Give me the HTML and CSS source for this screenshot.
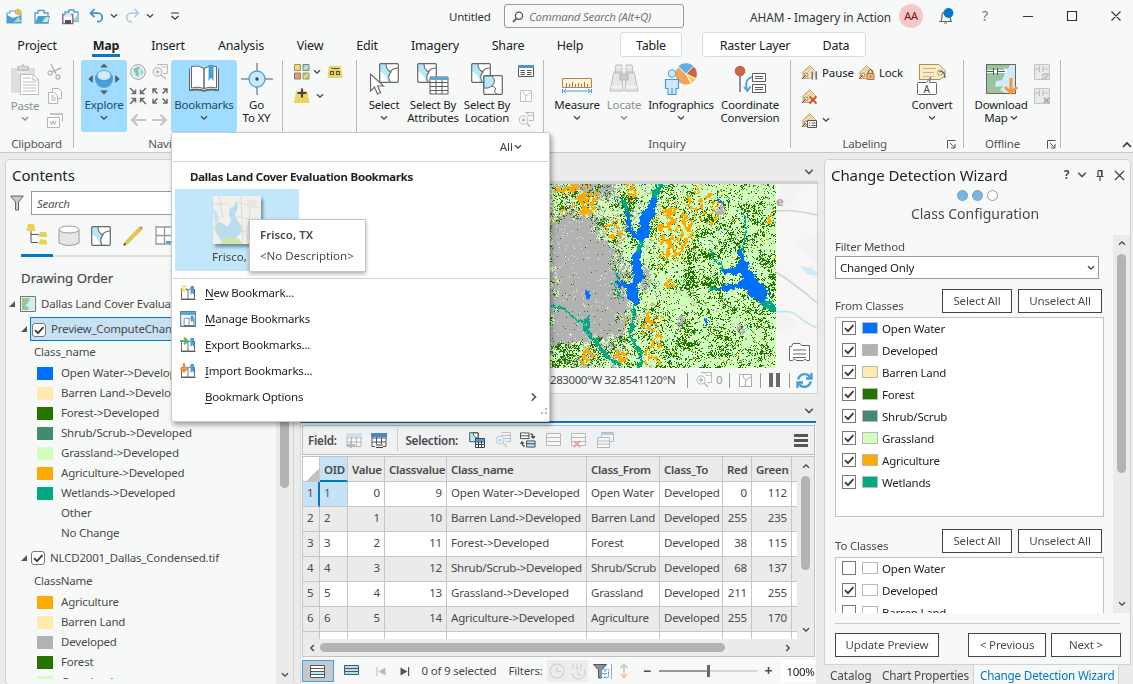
FILE: index.html
```html
<!DOCTYPE html>
<html lang="en">
<head>
<meta charset="utf-8">
<title>Untitled - Map</title>
<link rel="stylesheet" href="styles.css">
</head>
<body>
<svg class="defs" aria-hidden="true">
  <symbol id="chev" viewBox="0 0 8 6"><path d="M1 1.200l3 3 3-3" fill="none" stroke="currentColor" stroke-width="1.300"/></symbol>
  <symbol id="tick" viewBox="0 0 14 14"><path d="M3 7.200l3 3 5.400-6" fill="none" stroke="#3c3c3c" stroke-width="1.900"/></symbol>
  <symbol id="tag" viewBox="0 0 16 16"><path d="M2 14.500V8l6.500-6.500L14 7v3.500L8 14.500z" fill="#f5e3b5" stroke="#c39f6b"/><path d="M5 7l4-4M6.500 8.500l4-4M8.500 9.500l3-3" stroke="#d6ba8b" fill="none"/><circle cx="5" cy="11" r="2" fill="#fff" stroke="#a97b43"/><path d="M5 11l-4 4" stroke="#555"/></symbol>
  <symbol id="book" viewBox="0 0 16 16"><path d="M1.500 4.500v9.500h13V4M8 5v9M1.500 4.500Q5 3 8 5q2-1.500 4-1" fill="#fff" stroke="#6c6c6c"/><path d="M1 14.500h14.500" stroke="#5c5c5c"/><path d="M10.500 1h3.500v9l-1.750-2-1.750 2z" fill="#4a9fd8"/></symbol>
  <symbol id="poly" viewBox="0 0 20 20"><rect x=".7" y=".7" width="18.600" height="18.600" rx="1" fill="#fff"/><path d="M1 1h6q0 6 5 8-4 4-1 10H9Q8 12 1 8z" fill="#b5e9f9"/><path d="M1 8q7 4 8 11h3q-3-6 0-10Q7 7 7 1H1z" fill="#b5e9f9"/><path d="M7 1q0 6 5 8-4 4-1 10M11 9q3-4 8-4" fill="none" stroke="#6c6c6c" stroke-width="1.100"/><rect x=".7" y=".7" width="18.600" height="18.600" rx="1" fill="none" stroke="#666" stroke-width="1.200"/></symbol>
  <symbol id="launch" viewBox="0 0 9 9"><path d="M.5 8.500v-8h8M3 3l4.500 4.500M8 4v4H4" fill="none" stroke="#555"/></symbol>
  <symbol id="grid" viewBox="0 0 16 16"><path d="M1 1.500h14v13H1zM1 6h14M1 10h14M5.500 3v11M10.500 3v11" fill="#fff" stroke="currentColor"/></symbol>
</svg>

<header class="ribbon">
  <div class="titlebar">
    <div class="quick">
      <svg width="17" height="17" viewBox="0 0 17 17"><path d="M1 15V5h3V3h6v2h5v10z" fill="#fff" stroke="#5aa7de" stroke-width="1.200"/><path d="M1 15V7l6 3 8-3v8z" fill="#4a9fd8"/><path d="M8 14l5-6 2 6z" fill="#b7dca8"/><circle cx="12" cy="4" r="2.500" fill="#f4e27c" stroke="#cbb23e"/><path d="M12 0v8M8 4h8M9.500 1.500l5 5M14.500 1.500l-5 5" stroke="#cbb23e" stroke-width=".6"/></svg>
      <svg width="17" height="17" viewBox="0 0 17 17"><path d="M1 15V5h3V2.500h6V5h4v10z" fill="#fff" stroke="#4a9fd8" stroke-width="1.300"/><path d="M1 15L4 8h12l-2 7z" fill="#4a9fd8"/><path d="M8 14l4-5 3 0-1.500 5z" fill="#d7ecc4"/></svg>
      <svg width="17" height="17" viewBox="0 0 17 17"><path d="M3 8V4h4V2h5v2h4v9h-5" fill="#fff" stroke="#4a9fd8" stroke-width="1.300"/><path d="M11 12l5-6v7h-5z" fill="#a9d6a0"/><path d="M.8 6.500h10v9H.8z" fill="#fff" stroke="#8a66b5" stroke-width="1.500"/><path d="M3 12h6v4H3z" fill="#555"/><path d="M3 6h6v3H3z" fill="#e8dff4"/></svg>
      <svg width="15" height="16" viewBox="0 0 15 16" class="g11"><path d="M5.500 1L1.500 5.200l4 4M2 5.200h7a4 4 0 0 1 0 8.500H8" fill="none" stroke="#3f8fd6" stroke-width="1.800"/></svg>
      <svg class="chev g8"><use href="#chev"/></svg>
      <svg width="15" height="16" viewBox="0 0 15 16" class="g7 pale"><path d="M9.500 1l4 4.200-4 4M13 5.200H6a4 4 0 0 0 0 8.500h1" fill="none" stroke="#3f8fd6" stroke-width="1.800"/></svg>
      <svg class="chev g8"><use href="#chev"/></svg>
      <svg width="10" height="9" viewBox="0 0 10 9" class="g14"><path d="M1 1h8M1.500 4l3.500 3.300L8.500 4" fill="none" stroke="#333" stroke-width="1.200"/></svg>
    </div>
    <span class="doc">Untitled</span>
    <div class="cmd"><svg width="12" height="12" viewBox="0 0 12 12"><circle cx="7" cy="4.700" r="3.600" fill="none" stroke="#555" stroke-width="1.300"/><path d="M4.500 7.300L1 11" stroke="#555" stroke-width="1.800"/></svg><i>Command Search (Alt+Q)</i></div>
    <span class="account">AHAM - Imagery in Action</span>
    <span class="avatar">AA</span>
    <svg class="bell" width="17" height="17" viewBox="0 0 17 17"><path d="M1 13.500h13M3 13q1-2 1-5 0-4 3.500-4.500Q12 4 12 9l1 4" fill="none" stroke="#666" stroke-width="1.200"/><path d="M6 15h3" stroke="#666"/><circle cx="10.500" cy="5" r="4.900" fill="#0079c8"/></svg>
    <span class="help">?</span>
    <svg class="win" width="100" height="12" viewBox="0 0 100 12"><path d="M1 6.500h10M45.500 1.500h9v9h-9zM89.500 1.500l9 9M98.500 1.500l-9 9" fill="none" stroke="#333" stroke-width="1.100"/></svg>
  </div>

  <nav class="tabs">
    <span class="w74">Project</span><b class="w64"><span>Map</span></b><span class="w60">Insert</span><span class="w86">Analysis</span><span class="w52">View</span><span class="w62">Edit</span><span class="w74">Imagery</span><span class="w72">Share</span><span class="w52">Help</span>
    <div class="ctx ctx-a"><span class="w60">Table</span></div>
    <div class="ctx ctx-b"><span class="w104">Raster Layer</span><span class="w56">Data</span></div>
  </nav>

  <div class="groups">
    <section class="group" style="width:74px">
      <div class="tools clip">
        <div class="big w44 off"><svg width="32" height="33" viewBox="0 0 32 33"><path d="M2 5h24v25H2z" fill="#dedede"/><path d="M8 3h4q2-4 4 0h4v5H8z" fill="#c4c4c4"/><path d="M10 5h8M8 9h12" stroke="#f4f4f4"/><path d="M11.500 11.500h13l5 5v15h-18z" fill="#fff" stroke="#bdbdbd"/><path d="M24 12v5h5M14 15h8M14 19h13M14 22h13M14 25h13M14 28h13" fill="none" stroke="#bdbdbd"/></svg><span>Paste</span><svg class="chev"><use href="#chev"/></svg></div>
        <div class="stack">
          <svg width="16" height="16" viewBox="0 0 16 16"><path d="M4 0l5 10M14 4L5 8" stroke="#b5b5b5" stroke-width="1.500"/><circle cx="3" cy="9" r="2" fill="none" stroke="#b5b5b5" stroke-width="1.300"/><circle cx="11" cy="13" r="2" fill="none" stroke="#b5b5b5" stroke-width="1.300"/></svg>
          <svg width="16" height="16" viewBox="0 0 16 16"><path d="M5.500.500h6l3 3v7h-9z" fill="#fff" stroke="#b5b5b5"/><path d="M1.500 4.500h6l3 3v8h-9zM4 8h3M4 10h5M4 12h5" fill="#fff" stroke="#b5b5b5"/></svg>
          <svg width="16" height="16" viewBox="0 0 16 16"><path d="M3.500 1.500h12v8" fill="none" stroke="#b5b5b5"/><path d="M3 2h12" stroke="#c5c5c5" stroke-width="2"/><path d="M.5 5.500h12v10H.5zM3 9l1.500 4L6 9l1.500 4L9 9" fill="#fff" stroke="#b5b5b5"/></svg>
        </div>
      </div>
      <div class="cap">Clipboard</div>
    </section>

    <section class="group" style="width:209px">
      <div class="tools nav">
        <div class="big w46 on"><svg width="32" height="32" viewBox="0 0 32 32"><circle cx="16" cy="16" r="9" fill="#4d9ed8"/><ellipse cx="16" cy="12.500" rx="6.500" ry="4.500" fill="#d3eafb"/><path d="M16 .5l4 4h-8zM16 31.500l4-4h-8zM.3 16l4.500-4v8zM31.700 16l-4.500-4v8z" fill="#5c5c5c"/></svg><span>Explore</span><svg class="chev"><use href="#chev"/></svg></div>
        <div class="six">
          <svg width="16" height="16" viewBox="0 0 16 16"><circle cx="8" cy="8" r="7.300" fill="#fff" stroke="#999"/><circle cx="8" cy="8" r="5.800" fill="#c8e7f8"/><path d="M3 6q3-4 7-3l-2 3 1 5-2 2q-1-4-4-7M11 6l2 2-1 3z" fill="#8fc39b"/></svg>
          <svg width="16" height="16" viewBox="0 0 16 16"><path d="M5 .5h10.500v9H11M9 1q1 3 6 2" fill="none" stroke="#bbb"/><circle cx="5.500" cy="8" r="4.200" fill="#fff" stroke="#bbb" stroke-width="1.300"/><path d="M5.500 6v4M3.500 8h4M9 11l5 4" stroke="#bbb" stroke-width="1.500"/></svg>
          <svg width="16" height="16" viewBox="0 0 16 16"><path d="M0 0l5 5M1.500 5.500h4v-4M16 0l-5 5M10.500 1.500v4h4M0 16l5-5M1.500 10.500h4v4M16 16l-5-5M10.500 14.500v-4h4" fill="none" stroke="#6a6a6a" stroke-width="1.500"/></svg>
          <svg width="16" height="16" viewBox="0 0 16 16"><path d="M5.500 5.500L1 1M1 5V1h4M10.500 5.500L15 1M11 1h4v4M5.500 10.500L1 15M1 11v4h4M10.500 10.500L15 15M11 15h4v-4" fill="none" stroke="#6a6a6a" stroke-width="1.500"/></svg>
          <svg width="16" height="16" viewBox="0 0 16 16"><path d="M16 8H2M7.500 2.500L2 8l5.500 5.500" fill="none" stroke="#c5c7c7" stroke-width="2.200"/></svg>
          <svg width="16" height="16" viewBox="0 0 16 16"><path d="M0 8h14M8.500 2.500L14 8l-5.500 5.500" fill="none" stroke="#c5c7c7" stroke-width="2.200"/></svg>
        </div>
        <div class="big w66 on"><svg width="32" height="32" viewBox="0 0 32 32"><path d="M1.500 5.500v22q7-2.500 14.500 0 7-2.500 14.500 0v-22" fill="#eee" stroke="#666"/><path d="M2 27.500q7-2 14 .5 7-2.500 14-.5" fill="none" stroke="#666" stroke-width="1.600"/><path d="M3.500 25V3.500q7-2 12.500 2v20q-6-2.500-12.500-.5zM28.500 25V3.500Q22 1.500 16 5.500v20q6-2.500 12.500-.5z" fill="#fff" stroke="#666"/><path d="M20.500 2h5v16l-2.500-3-2.500 3z" fill="#4a9fd8"/></svg><span>Bookmarks</span><svg class="chev"><use href="#chev"/></svg></div>
        <div class="big w39"><svg width="32" height="32" viewBox="0 0 32 32"><path d="M16 0v8M16 24v8M0 16h8M24 16h8" stroke="#555"/><circle cx="16" cy="16" r="8" fill="#cde8fa" stroke="#4a9fd8" stroke-width="1.300"/><circle cx="16" cy="16" r="1.700" fill="#444"/></svg><span>Go</span><span>To XY</span></div>
      </div>
      <div class="cap navcap">Navigate</div>
    </section>

    <section class="group" style="width:74px">
      <div class="tools layer">
        <svg width="16" height="16" viewBox="0 0 16 16"><path d="M.5.500h6v6h-6z" fill="#ecd96f" stroke="#a39657"/><path d="M9 .5h6v6H9z" fill="#9fd4ee" stroke="#68899c"/><path d="M.5 9h6v6h-6z" fill="#dc9f75" stroke="#a1765a"/><path d="M9 9h6v6H9z" fill="#97cba0" stroke="#a39657"/><path d="M10 14l4-4M10 5l4-3" stroke="#f1db65" stroke-width="2"/></svg>
        <svg class="chev"><use href="#chev"/></svg>
        <svg width="16" height="16" viewBox="0 0 16 16"><path d="M2 2h12l1.500 12H.5z" fill="#ecd65e"/><path d="M4.500 4.500h8M3.500 7.500h3v3h-3zM9.500 7.500h3v3h-3z" fill="none" stroke="#555" stroke-width="1.100"/></svg>
        <svg width="16" height="16" viewBox="0 0 16 16"><path d="M2 3h11l2.500 12H0z" fill="#ecd65e"/><path d="M8 .5v9M3.500 5h9" stroke="#444" stroke-width="2.200"/></svg>
        <svg class="chev l2"><use href="#chev"/></svg>
      </div>
      <div class="cap"></div>
    </section>

    <section class="group" style="width:187px">
      <div class="tools sel">
        <div class="big w46"><svg width="32" height="32" viewBox="0 0 32 32"><svg x="11" y="0" width="20" height="20"><use href="#poly"/></svg><path d="M2.500 11v17l4-4 3 7 3-1.500-3-6.500h6z" fill="#fff" stroke="#6c6c6c" stroke-width="1.200"/></svg><span>Select</span><svg class="chev"><use href="#chev"/></svg></div>
        <div class="big w52"><svg width="32" height="32" viewBox="0 0 32 32"><svg x="0" y="0" width="20" height="20"><use href="#poly"/></svg><path d="M13 14h18v17H13z" fill="#fff" stroke="#5c5c5c"/><path d="M13 14h18v3H13z" fill="#5aa7de"/><path d="M13 19.500h18M13 23.500h18M13 27.500h18M19 17v14M25 17v14" stroke="#5c5c5c"/></svg><span>Select By</span><span>Attributes</span></div>
        <div class="big w60"><svg width="32" height="32" viewBox="0 0 32 32"><svg x="0" y="0" width="20" height="20"><use href="#poly"/></svg><svg x="12" y="12" width="20" height="20"><rect x=".7" y=".7" width="18.600" height="18.600" rx="1" fill="#fff" stroke="#666" stroke-width="1.200"/><path d="M1 1h8q5 5 0 10-4 3-8 2z" fill="#b5e9f9" stroke="#666"/><path d="M9 11q5 2 3 4t2 4" fill="none" stroke="#666"/></svg></svg><span>Select By</span><span>Location</span></div>
        <div class="stack">
          <svg width="16" height="16" viewBox="0 0 16 16" class="up1"><path d="M.5 2.500h15v11H.5z" fill="#fff" stroke="#555"/><path d="M0 2h16v3H0z" fill="#4d97cc"/><path d="M2.500 7.500h4.500M2.500 9.500h4.500M2.500 11.500h4.500M9 7.500h4.500M9 9.500h4.500M9 11.500h4.500" stroke="#555"/></svg>
          <svg width="16" height="16" viewBox="0 0 16 16"><path d="M2.500 2.500h11v11h-11zM5 3q0 4 3 5l-1 5M8 8l5-4" fill="#fff" stroke="#c2c2c2"/></svg>
          <svg width="16" height="16" viewBox="0 0 16 16"><path d="M7 .5h8.500v8H11M9 1q1 4 6 2" fill="none" stroke="#bbb"/><circle cx="5.500" cy="8" r="4.200" fill="#fff" stroke="#ccc" stroke-width="1.300"/><path d="M5.500 6v4M3.500 8h4M9 11l3 4" stroke="#bbb" stroke-width="1.500"/></svg>
        </div>
      </div>
      <div class="cap">Selection</div>
    </section>

    <section class="group" style="width:247px">
      <div class="tools inq">
        <div class="big w54"><svg width="32" height="32" viewBox="0 0 32 32"><path d="M1.500 15.500h29v9h-29z" fill="#fdf2dc" stroke="#b5854a"/><path d="M5.500 24v-4M8.500 24v-3M11.500 24v-5M14.500 24v-3M17.500 24v-4M20.500 24v-3M23.500 24v-5M26.500 24v-3" stroke="#a87a43"/><path d="M1.500 26v4M30.500 26v4M3 28h26M5 26l-2.500 2L5 30M27 26l2.500 2-2.500 2" fill="none" stroke="#4a9fd8"/></svg><span>Measure</span><svg class="chev"><use href="#chev"/></svg></div>
        <div class="big w40 off"><svg width="32" height="32" viewBox="0 0 32 32"><path d="M8 2h6v8H7zM18 2h6l1 8h-7zM6 9h8l1 19H2zM18 9h8l4 19H17z" fill="#e4e5e5" stroke="#bdbfbf"/><path d="M12 11h8v6h-8z" fill="#c9caca" stroke="#b5b6b6"/><path d="M8 4h6M18 4h6M3 24h11M18 24h11" fill="none" stroke="#fff" stroke-width="1.200"/></svg><span>Locate</span><svg class="chev"><use href="#chev"/></svg></div>
        <div class="big w72"><svg width="34" height="32" viewBox="0 0 34 32"><circle cx="22" cy="11" r="10.500" fill="#f0a557"/><path d="M22 11l-7.500-7.500a10.500 10.500 0 0 1 15 0z" fill="#5bb0e6"/><path d="M22 11l7-8a10.500 10.500 0 0 1 3 12.500z" fill="#cc6547"/><path d="M22 11l10 4.500a10.500 10.500 0 0 1-5 5z" fill="#ecd35c"/><path d="M22 11l7.500-8M22 11l-8-7.500M22 11l10 4.500M22 11l5 9" stroke="#fff"/><circle cx="8" cy="10.500" r="3.800" fill="#cfe8fa" stroke="#4a9fd8"/><path d="M1.500 16.500h13v9h-2.500v6h-8v-6H1.500zM8 25v6" fill="#cfe8fa" stroke="#4a9fd8" stroke-width="1.200"/></svg><span>Infographics</span><svg class="chev"><use href="#chev"/></svg></div>
        <div class="big w64"><svg width="34" height="32" viewBox="0 0 34 32"><circle cx="7" cy="8" r="5.300" fill="#cc6547"/><path d="M7 13v16" stroke="#555" stroke-width="1.300"/><path d="M19 14q-8 2-5 13M11 24l3.500 4 3-4.500" fill="none" stroke="#4a9fd8" stroke-width="1.700"/><path d="M19.500 10.500h13v8h-13zM19.500 21.500h13v8h-13zM22 13.500h8M22 15.500h8M22 24.500h8M22 26.500h8" fill="#fff" stroke="#5c5c5c"/></svg><span>Coordinate</span><span>Conversion</span></div>
      </div>
      <div class="cap">Inquiry</div>
    </section>

    <section class="group" style="width:173px">
      <div class="tools lab">
        <div class="labcol">
          <div class="labrow"><svg width="18" height="16" viewBox="0 0 18 16"><use href="#tag" width="16" height="16"/><path d="M10 7h2.500v9H10zM14 7h2.500v9H14z" fill="#777" stroke="#fff" stroke-width=".7"/></svg><span class="w38">Pause</span><svg width="18" height="16" viewBox="0 0 18 16"><use href="#tag" width="16" height="16"/><path d="M9 9.500h7v6H9z" fill="#efb878" stroke="#a97b43"/><path d="M10.500 9V7q2-3 4 0v2M12.500 11.500v2" fill="none" stroke="#86602f" stroke-width="1.200"/></svg><span>Lock</span></div>
          <div class="labrow"><svg width="18" height="16" viewBox="0 0 18 16"><use href="#tag" width="16" height="16"/><path d="M8.500 8.500l7 7M15.500 8.500l-7 7" stroke="#d04d30" stroke-width="1.800"/></svg></div>
          <div class="labrow"><svg width="18" height="16" viewBox="0 0 18 16"><use href="#tag" width="16" height="16"/><path d="M6.500 8.500h9v7h-9zM8 11h1M10.500 11h4M8 13.500h1M10.500 13.500h4" fill="#fff" stroke="#555"/></svg><svg class="chev"><use href="#chev"/></svg></div>
        </div>
        <div class="big w46"><svg width="32" height="32" viewBox="0 0 32 32"><path d="M3.500 1.500H23l6 6v5l-5 4H3.500z" fill="#f8ecc6" stroke="#b58b55"/><path d="M7 5.500h13M7 9.500h11M7 13.500h11" stroke="#cfb184"/><circle cx="24" cy="9.500" r="2.500" fill="#fff" stroke="#b58b55"/><path d="M23 9q6-2 6 6" fill="none" stroke="#666" stroke-width="1.300"/><path d="M2.500 19.500h8l4-5-1 5h6q1 0 1 1v10q0 1-1 1h-17q-1 0-1-1v-10q0-1 1-1z" fill="#fff" stroke="#666"/><text x="7.500" y="29.500" class="glyph">A</text></svg><span>Convert</span><svg class="chev"><use href="#chev"/></svg></div>
      </div>
      <div class="cap caplab"><span>Labeling</span><svg class="launch"><use href="#launch"/></svg></div>
    </section>

    <section class="group" style="width:97px">
      <div class="tools offl">
        <div class="big w62"><svg width="32" height="32" viewBox="0 0 32 32"><path d="M1.500 1.500h29v29h-29z" fill="#9ac59c" stroke="#666"/><path d="M30 2v28h-10l-5-3 3-4-8 1 1-6 6-1 3-7-1-5 4 1 2-4z" fill="#d2eafc"/><path d="M0 8.500h22" stroke="#fff" stroke-width="3"/><path d="M1 8.500h7M12.500 8.500H20M8.500 5v7M12.500 5v7" stroke="#555"/><path d="M1.500 1.500h29v29h-29z" fill="none" stroke="#666"/><path d="M26 15v14M20 24l6 6 6-6" fill="none" stroke="#f09a3e" stroke-width="3"/></svg><span>Download</span><span class="two">Map <svg class="chev in"><use href="#chev"/></svg></span></div>
        <div class="stack">
          <svg width="16" height="16" viewBox="0 0 16 16"><path d="M.5.500h15v15H.5z" fill="#e8e9e9" stroke="#c3c5c5"/><path d="M1 5h4M9 5h5M5.500 2v6M9 2v6" stroke="#bbb"/><path d="M8 12q3-4 6-1M14 9v3h-3M8 14h5" fill="none" stroke="#bbb" stroke-width="1.300"/></svg>
          <svg width="16" height="16" viewBox="0 0 16 16"><path d="M.5.500h15v15H.5z" fill="#e8e9e9" stroke="#c3c5c5"/><path d="M1 5h4M9 5h5M5.500 2v6M9 2v6" stroke="#bbb"/><path d="M10 10l5 5M15 10l-5 5" stroke="#aaa" stroke-width="1.800"/></svg>
        </div>
      </div>
      <div class="cap capoff"><span>Offline</span><svg class="launch"><use href="#launch"/></svg></div>
    </section>
    <svg class="collapse" width="10" height="7" viewBox="0 0 10 7"><path d="M1 6l4-4 4 4" fill="none" stroke="#333" stroke-width="1.600"/></svg>
  </div>
</header>

<main class="work">
  <aside class="contents">
    <div class="cmain">
      <h2>Contents</h2>
      <div class="find"><svg width="14" height="16" viewBox="0 0 14 16"><path d="M.7 1h12.600L8.500 7v8h-3V7z" fill="#c9cbcb" stroke="#666"/></svg><i>Search</i></div>
      <div class="views">
        <span class="v on"><svg width="24" height="22" viewBox="0 0 24 22"><path d="M6 7v11.500h7M6 10.500h8" fill="none" stroke="#555"/><path d="M3 0h6l1.500 7h-9zM15 8h6l1.500 5h-9zM15 15.500h6l1.500 5h-9z" fill="#e9d152"/></svg></span>
        <span class="v"><svg width="22" height="22" viewBox="0 0 22 22"><path d="M1 5v13q10 5 20 0V5" fill="#e4e5e5" stroke="#999"/><ellipse cx="11" cy="4.500" rx="10" ry="3.500" fill="#fff" stroke="#999"/></svg></span>
        <span class="v"><svg width="20" height="20"><use href="#poly"/></svg></span>
        <span class="v"><svg width="20" height="20" viewBox="0 0 20 20"><path d="M1 19l2-4L16 1.500 18.500 4 5 17.500z" fill="#e6c847" stroke="#c9a92f" stroke-width=".6"/><path d="M16 1.500L18 0l2 2-1.500 2z" fill="#e58a80"/><path d="M0 20l1.500-3.500L3.500 18.500z" fill="#555"/></svg></span>
        <span class="v"><svg width="20" height="20" viewBox="0 0 20 20"><path d="M1 1h17v17H1zM1 9.500h17M9.500 1v17" fill="#fff" stroke="#999" stroke-width="1.300"/><path d="M17 10v10M11 16h9" stroke="#4a9fd8" stroke-width="2"/></svg></span>
      </div>
      <h3>Drawing Order</h3>
      <div class="node n0"><i class="tri"></i><svg width="16" height="16" viewBox="0 0 16 16"><path d="M.7.700h14.600v14.600H.7z" fill="#9ac59c"/><path d="M14 2v12H8l1-3-4-1 3-3 2-5z" fill="#d2eafc"/><path d="M1.200 1.200h13.600v13.600H1.200z" fill="none" stroke="#fff"/><path d="M.5.500h15v15H.5z" fill="none" stroke="#777"/></svg><span>Dallas Land Cover Evaluation</span></div>
      <div class="node n1"><i class="tri"></i><div class="pick"><i class="cb"><svg><use href="#tick"/></svg></i><span>Preview_ComputeChange</span></div></div>
      <div class="field">Class_name</div>
      <ul class="legend">
        <li><i class="water"></i>Open Water-&gt;Developed</li><li><i class="barren"></i>Barren Land-&gt;Developed</li><li><i class="forest"></i>Forest-&gt;Developed</li><li><i class="shrub"></i>Shrub/Scrub-&gt;Developed</li><li><i class="grass"></i>Grassland-&gt;Developed</li><li><i class="agri"></i>Agriculture-&gt;Developed</li><li><i class="wet"></i>Wetlands-&gt;Developed</li><li><i></i>Other</li><li><i></i>No Change</li>
      </ul>
      <div class="node n2"><i class="tri"></i><i class="cb"><svg><use href="#tick"/></svg></i><span>NLCD2001_Dallas_Condensed.tif</span></div>
      <div class="field">ClassName</div>
      <ul class="legend">
        <li><i class="agri"></i>Agriculture</li><li><i class="barren"></i>Barren Land</li><li><i class="dev"></i>Developed</li><li><i class="forest"></i>Forest</li><li><i class="grass"></i>Grassland</li>
      </ul>
    </div>
    <div class="vbar cbar"><i class="thumb"></i><svg class="chev"><use href="#chev"/></svg></div>
  </aside>

  <section class="center">
    <div class="strip"><svg class="chev lg"><use href="#chev"/></svg></div>
    <div class="mapview">
      <div class="map"><canvas id="landcover" width="226" height="184"></canvas><svg class="base" width="41" height="184" viewBox="0 0 41 184"><rect width="41" height="184" fill="#f7f6f4"/><path d="M6 0h20l-10 20L0 24zM20 60l21-10v30zM0 120l20 20-20 10z" fill="#f2f3f0"/><path d="M0 27q16-2 41 4" fill="none" stroke="#d2d2d2" stroke-width="1.500"/><path d="M0 88q22 14 41 31" fill="none" stroke="#d6d2d2" stroke-width="1.500"/><path d="M0 128q16-2 22 4t19 12" fill="none" stroke="#bfe3ec" stroke-width="1.500"/><path d="M24 82l12 2 5 4v4l-10-2z" fill="#cfeaf8"/><text x="0" y="22" class="place">e</text><path d="M13.500 162.500h2l1.500-3h7l1.500 2h8v15h-3q-1-3-3 0h-7q-2-3-4 0h-3zM17 166h13M17 170h13M17 173.500h13" fill="#fff" stroke="#666"/></svg></div>
      <div class="mapbar"><span class="coord">283000°W 32.8541120°N</span><i class="sep"></i><svg class="mb1" width="16" height="16" viewBox="0 0 16 16"><path d="M5 .5h10.500v10H11M9 1q1 4 6 2" fill="#fff" stroke="#b9b9b9"/><circle cx="5" cy="8" r="4" fill="#fff" stroke="#a9cfe8" stroke-width="1.300"/><path d="M5 6v4M3 8h4M8 11l4 4" stroke="#c3b48e" stroke-width="1.300"/></svg><span class="zero">0</span><i class="sep s2"></i><svg width="13" height="13" viewBox="0 0 13 13"><path d="M.5.500h12v12H.5zM4 1q0 4 3 5l-1 6M7 6l5-3" fill="#fff" stroke="#a9a9a9"/></svg><i class="sep s3"></i><i class="pause"></i><i class="sep s4"></i><svg width="17" height="17" viewBox="0 0 17 17"><path d="M2 7.500Q4 2 9 2.200q3 0 5 3M15.500 1v5.500H10M15 9.500q-2 5.500-7 5.300-3 0-5-3M1.500 16v-5.500H7" fill="none" stroke="#459cd9" stroke-width="2.300"/></svg></div>
    </div>
    <div class="strip s-b"><svg class="chev lg"><use href="#chev"/></svg></div>
    <div class="tablepane">
      <div class="tbar">
        <b>Field:</b>
        <svg width="16" height="16" class="dim"><use href="#grid"/><path d="M0 1h16v4H0z" fill="#a7cde8"/><path d="M5 9v7M1 13h8" stroke="#777" stroke-width="2"/></svg>
        <svg width="16" height="16" class="c-d"><use href="#grid"/><path d="M0 1h16v4H0z" fill="#4a89bd"/><path d="M4 12h8v4H4z" fill="#f0f1f3"/><path d="M5 13h7M5 15.500h7" stroke="#444"/></svg>
        <i class="tsep"></i>
        <b class="selb">Selection:</b>
        <svg width="16" height="16" viewBox="0 0 16 16"><path d="M.7.700h8.500v9H.7z" fill="#b5e9f9" stroke="#555"/><path d="M4 1h5v5q-4 0-5-5" fill="#fff" stroke="#555"/><path d="M6.500 6.500h9v9h-9z" fill="#fff" stroke="#444"/><path d="M7 7h8v2.500H7z" fill="#4a9fd8"/><path d="M7 10h8M7 12.500h8M9.500 9v6M12.500 9v6" stroke="#444"/></svg>
        <svg width="16" height="16" viewBox="0 0 16 16" class="dim"><path d="M6 .5h9.500v9H11M6 3.500h9M9 6.500h6" fill="none" stroke="#888"/><circle cx="5" cy="8" r="4" fill="#eef8fd" stroke="#5aa7de"/><path d="M5 6v4M3 8h4" stroke="#5aa7de"/><path d="M8 11l4 4" stroke="#d8a040" stroke-width="1.800"/></svg>
        <svg width="16" height="16" viewBox="0 0 17 16"><path d="M.5.500h9v6h-9zM.5 3.500h9" fill="#fff" stroke="#444"/><path d="M7 9h9v6.500H7z" fill="#b5e9f9" stroke="#444"/><path d="M7 12h9M11 1.500q3 0 3 4M12 4l2 2 2-2M5 14.500q-3 0-3-4M.5 12l1.500-2 2 2" fill="none" stroke="#444" stroke-width="1.200"/></svg>
        <svg width="16" height="16" viewBox="0 0 16 16" class="dim"><path d="M.5 1.500h14v12H.5zM.5 5.500h14M.5 9.500h14" fill="#fff" stroke="#777"/></svg>
        <svg width="16" height="16" viewBox="0 0 16 16" class="dim"><path d="M.5 1.500h14v12H.5zM.5 5.500h14M.5 9.500h14" fill="#fff" stroke="#777"/><path d="M3 9l6 6M9 9l-6 6" stroke="#d04d30" stroke-width="1.800"/></svg>
        <svg width="17" height="16" viewBox="0 0 17 16" class="dim"><path d="M4.500.500h12v9h-12z" fill="#fff" stroke="#777"/><path d="M4 1h12v2H4z" fill="#5aa7de"/><path d="M.5 5.500h12v10H.5zM.5 9h12M.5 12h12" fill="#fff" stroke="#777"/></svg>
        <i class="burger"></i>
      </div>
      <div class="gridbox">
        <div class="gridclip">
        <table>
          <colgroup><col style="width:17px"><col style="width:28px"><col style="width:37px"><col style="width:62px"><col style="width:140px"><col style="width:73px"><col style="width:63px"><col style="width:29px"><col style="width:40px"><col style="width:5px"></colgroup>
          <tr><th class="corner"></th><th class="cur">OID</th><th class="r">Value</th><th>Classvalue</th><th>Class_name</th><th>Class_From</th><th>Class_To</th><th>Red</th><th>Green</th><th></th></tr>
          <tr><th class="rn cur1">1</th><td class="curc">1</td><td class="r">0</td><td class="r">9</td><td>Open Water-&gt;Developed</td><td>Open Water</td><td>Developed</td><td class="r">0</td><td class="r">112</td><td></td></tr>
          <tr><th class="rn">2</th><td>2</td><td class="r">1</td><td class="r">10</td><td>Barren Land-&gt;Developed</td><td>Barren Land</td><td>Developed</td><td class="r">255</td><td class="r">235</td><td></td></tr>
          <tr><th class="rn">3</th><td>3</td><td class="r">2</td><td class="r">11</td><td>Forest-&gt;Developed</td><td>Forest</td><td>Developed</td><td class="r">38</td><td class="r">115</td><td></td></tr>
          <tr><th class="rn">4</th><td>4</td><td class="r">3</td><td class="r">12</td><td>Shrub/Scrub-&gt;Developed</td><td>Shrub/Scrub</td><td>Developed</td><td class="r">68</td><td class="r">137</td><td></td></tr>
          <tr><th class="rn">5</th><td>5</td><td class="r">4</td><td class="r">13</td><td>Grassland-&gt;Developed</td><td>Grassland</td><td>Developed</td><td class="r">211</td><td class="r">255</td><td></td></tr>
          <tr><th class="rn">6</th><td>6</td><td class="r">5</td><td class="r">14</td><td>Agriculture-&gt;Developed</td><td>Agriculture</td><td>Developed</td><td class="r">255</td><td class="r">170</td><td></td></tr>
          <tr><th class="rn"></th><td></td><td></td><td></td><td></td><td></td><td></td><td></td><td></td><td></td></tr>
        </table>
        </div>
        <div class="vbar gbar"><svg class="chev upc"><use href="#chev"/></svg><i class="thumb"></i><svg class="chev"><use href="#chev"/></svg></div>
        <div class="hbar"><svg class="chev lc"><use href="#chev"/></svg><i class="thumb"></i><svg class="chev rc"><use href="#chev"/></svg></div>
      </div>
      <div class="tfoot">
        <span class="mode"><svg width="15" height="13" viewBox="0 0 15 13"><path d="M.5.500h14v12H.5z" fill="#fff"/><path d="M1 6.500h13v3H1z" fill="#b5e9f9"/><path d="M.5.500h14v12H.5zM.5 3.500h14M.5 6.500h14M.5 9.500h14" fill="none" stroke="#555"/></svg></span>
        <svg class="mode2" width="15" height="10" viewBox="0 0 15 10"><path d="M.5.500h14v9H.5zM.5 3.500h14M.5 6.500h14" fill="#a5e3f5" stroke="#555"/></svg>
        <svg width="10" height="9" viewBox="0 0 10 9" class="first"><path d="M9.500.500v8L2.500 4.500zM.5 0h1v9h-1z" fill="#b9bbbb"/></svg>
        <svg width="10" height="9" viewBox="0 0 10 9" class="next"><path d="M.5.500v8l7-4zM8 0h1.200v9H8z" fill="#555"/></svg>
        <span class="nsel">0 of 9 selected</span><span class="filt">Filters:</span>
        <span class="tog"><svg width="16" height="16" viewBox="0 0 16 16"><circle cx="8" cy="8" r="7" fill="none" stroke="#d2d2d2" stroke-width="1.300"/><path d="M8 4v4.500h4" fill="none" stroke="#d2d2d2" stroke-width="1.300"/></svg><svg width="16" height="16" viewBox="0 0 16 16"><path d="M14 6a6.500 6.500 0 1 1-12 4" fill="none" stroke="#d2d2d2" stroke-width="1.300"/><path d="M3 1v6M7 1v6M11 1v6M1.500 3h3M5.500 5h3M9.500 3h3M8 8v4h4" fill="none" stroke="#d2d2d2"/></svg></span>
        <svg class="fun" width="20" height="16" viewBox="0 0 20 16"><path d="M.5 1.500h13l-5 5.500v8h-3V7z" fill="#8d8f8f" stroke="#555"/><path d="M8.500 6.500h7v8h-7z" fill="#fff" stroke="#4a9fd8" stroke-dasharray="2 1"/><path d="M12 7v8M9 10.500h7" stroke="#4a9fd8" stroke-dasharray="2 1"/><path d="M18.500 1v15" stroke="#aaa"/></svg>
        <svg class="ud" width="10" height="16" viewBox="0 0 10 16"><path d="M5 8V2M1.500 5L5 1.500 8.500 5" fill="none" stroke="#a9d9b5" stroke-width="1.700"/><path d="M5 8v6M1.500 11L5 14.500 8.500 11" fill="none" stroke="#f3c99a" stroke-width="1.700"/></svg>
        <b class="pm">−</b><span class="slider"><i></i></span><b class="pm">+</b><span class="pct">100%</span>
      </div>
    </div>
  </section>

  <aside class="side">
    <div class="wizard">
      <div class="whead"><h2>Change Detection Wizard</h2><b>?</b><svg class="chev lg"><use href="#chev"/></svg><svg width="8" height="11" viewBox="0 0 8 11"><path d="M2 .7h4V6M2 .7V6M.5 6.500h7M4 7v4M5.500 1v5" fill="none" stroke="#444" stroke-width="1.200"/></svg><svg width="11" height="11" viewBox="0 0 11 11"><path d="M1 1l9 9M10 1l-9 9" stroke="#444" stroke-width="1.300"/></svg></div>
      <div class="dots"><i></i><i></i><i class="o"></i></div>
      <div class="step">Class Configuration</div>
      <div class="wbody">
        <div class="form">
          <label>Filter Method</label>
          <div class="combo">Changed Only<svg class="chev"><use href="#chev"/></svg></div>
          <div class="cls"><span>From Classes</span><button class="b70">Select All</button><button class="b84">Unselect All</button></div>
          <ul class="checks from">
            <li><i class="cb"><svg><use href="#tick"/></svg></i><i class="sw water"></i>Open Water</li><li><i class="cb"><svg><use href="#tick"/></svg></i><i class="sw dev"></i>Developed</li><li><i class="cb"><svg><use href="#tick"/></svg></i><i class="sw barren"></i>Barren Land</li><li><i class="cb"><svg><use href="#tick"/></svg></i><i class="sw forest"></i>Forest</li><li><i class="cb"><svg><use href="#tick"/></svg></i><i class="sw shrub"></i>Shrub/Scrub</li><li><i class="cb"><svg><use href="#tick"/></svg></i><i class="sw grass"></i>Grassland</li><li><i class="cb"><svg><use href="#tick"/></svg></i><i class="sw agri"></i>Agriculture</li><li><i class="cb"><svg><use href="#tick"/></svg></i><i class="sw wet"></i>Wetlands</li>
          </ul>
          <div class="cls c2"><span>To Classes</span><button class="b70">Select All</button><button class="b84">Unselect All</button></div>
          <ul class="checks to">
            <li><i class="cb"></i><i class="sw"></i>Open Water</li><li><i class="cb"><svg><use href="#tick"/></svg></i><i class="sw"></i>Developed</li><li><i class="cb"></i><i class="sw"></i>Barren Land</li>
          </ul>
        </div>
        <div class="vbar wbar"><svg class="chev upc"><use href="#chev"/></svg><i class="thumb"></i><svg class="chev"><use href="#chev"/></svg></div>
      </div>
      <div class="actions"><button class="b104">Update Preview</button><button class="b78">&lt; Previous</button><button class="b70">Next &gt;</button></div>
    </div>
    <div class="ptabs"><span class="p1">Catalog</span><span class="p2">Chart Properties</span><span class="p3">Change Detection Wizard</span></div>
  </aside>
</main>

<div class="popup">
  <div class="all">All<svg class="chev"><use href="#chev"/></svg></div>
  <b class="ptitle">Dallas Land Cover Evaluation Bookmarks</b>
  <div class="tile"><svg width="48" height="48" viewBox="0 0 48 48"><rect width="48" height="48" fill="#f1f0ea"/><path d="M16 4l1 6-1 8 2 6-3 7-8-5-5 2 2 10 5 8 8 1 7-6 5-6-1-6-4-5-2-6 3-6-2-8-2 6-3 3z" fill="#b9dcf0"/><path d="M0 12l4 4 2 8-4 4z" fill="#c6e2ee"/><path d="M10 42l8-1 8 2 4 5H8zM0 30l6 2-2 6z" fill="#cfe3b4"/><path d="M24 6l22 6M28 0l2 46M38 2l-4 44M24 20l24 6M28 36l20-4M0 8h14M6 0l4 22" stroke="#dddbd3" fill="none"/><path d="M32 30h14v10H32zM34 4h10v8H34z" fill="#eae6e3"/></svg><span>Frisco,</span></div>
  <ul class="menu">
    <li><svg width="17" height="16" viewBox="0 0 17 16"><use href="#book" width="16" height="16"/><path d="M4 0v7M.5 3.500h7M1.500 1l5 5M6.500 1l-5 5" stroke="#d9c24c"/><circle cx="4" cy="3.500" r="1.700" fill="#fdf3a5"/></svg><span><u>N</u>ew Bookmark...</span></li>
    <li><svg width="17" height="17" viewBox="0 0 17 17"><path d="M.7.700h14.600v14.600H.7z" fill="#fff" stroke="#5c7f99" stroke-width="1.200"/><path d="M1 1h14v3H1z" fill="#5aa7de"/><svg x="3" y="4" width="12" height="12"><use href="#book"/></svg></svg><span><u>M</u>anage Bookmarks</span></li>
    <li><svg width="17" height="16" viewBox="0 0 17 16"><use href="#book" width="16" height="16"/><path d="M0 4h7M4 .8L7.500 4 4 7.200" fill="none" stroke="#5fae68" stroke-width="2"/></svg><span><u>E</u>xport Bookmarks...</span></li>
    <li><svg width="17" height="16" viewBox="0 0 17 16"><use href="#book" width="16" height="16"/><path d="M4 0v8M.5 5L4 8.500 7.500 5" fill="none" stroke="#ee8f36" stroke-width="2"/></svg><span><u>I</u>mport Bookmarks...</span></li>
    <li><i class="ph"></i><span><u>B</u>ookmark Options</span><svg class="chev lg rc"><use href="#chev"/></svg></li>
  </ul>
  <svg class="grip" width="6" height="6" viewBox="0 0 6 6"><path d="M4 0h2v2H4zM4 4h2v2H4zM0 4h2v2H0z" fill="#b9b9b9"/></svg>
</div>
<div class="tip"><b>Frisco, TX</b><span>&lt;No Description&gt;</span></div>
<script src="map.js"></script>
</body>
</html>
```

FILE: styles.css
```css
* { box-sizing: border-box; }
body { margin: 0; width: 1133px; height: 684px; overflow: hidden; position: relative; background: #ebebeb; color: #4a4a4a; font: 11.5px/16px "Noto Sans", "Open Sans", sans-serif; letter-spacing: -0.2px; white-space: nowrap; }
svg { display: block; flex: none; overflow: visible; }
ul { list-style: none; margin: 0; padding: 0; }
h2, h3 { margin: 0; font-weight: 400; }
i { flex: none; }
.defs { position: absolute; width: 0; height: 0; overflow: hidden; }
.chev { width: 8px; height: 6px; color: #444; }
.chev.lg { width: 10px; height: 8px; color: #555; }

/* colours of the land cover classes */
.water { background: #0070ff; }
.dev { background: #b2b2b2; }
.barren { background: #ffebaf; }
.forest { background: #267300; }
.shrub { background: #448970; }
.grass { background: #d3ffbe; }
.agri { background: #ffaa00; }
.wet { background: #00a884; }

/* ribbon */
.ribbon { height: 153px; background: #f7f9f8; border-bottom: 1px solid #c4c6c7; }
.titlebar { height: 32px; display: flex; align-items: center; color: #333; }
.quick { display: flex; align-items: center; padding-left: 6px; width: 449px; gap: 11px; }
.quick .g11 { margin-left: -1px; }
.quick .g8 { margin-left: -5px; }
.quick .g7 { margin-left: -4px; }
.quick .g14 { margin-left: 5px; }
.pale { opacity: .4; }
.doc { width: 55px; padding-top: 1px; }
.cmd { width: 180px; height: 24px; border: 1px solid #999; border-radius: 3px; display: flex; align-items: center; padding: 1px 0 0 7px; gap: 5px; color: #777; letter-spacing: -0.28px; }
.account { width: 149px; margin-left: 66px; letter-spacing: -0.05px; font-size: 11.8px; padding-top: 1px; }
.avatar { width: 24px; height: 24px; border-radius: 12px; background: #f5c9c9; color: #6e1414; font-size: 11px; text-align: center; line-height: 24px; }
.bell { margin-left: 15px; }
.help { margin-left: 24px; width: 12px; text-align: center; color: #777; font-size: 14px; }
.win { margin-left: 31px; }

.tabs { height: 26px; display: flex; font-size: 12.5px; line-height: 27px; color: #222; text-align: center; }
.tabs > b { display: flex; justify-content: center; }
.tabs > b span { width: 28px; height: 25px; border-bottom: 3px solid #0079c8; display: flex; justify-content: center; letter-spacing: -0.3px; }
.ctx { display: flex; height: 25px; line-height: 25px; background: #fff; border: 1px solid #dadcdc; border-radius: 3px; }
.ctx-a { margin-left: 24px; }
.ctx-b { margin-left: 20px; width: 164px; }
.w74 { width: 74px; } .w64 { width: 64px; } .w60 { width: 60px; } .w86 { width: 86px; } .w52 { width: 52px; } .w62 { width: 62px; }
.w72 { width: 72px; } .w104 { width: 104px; } .w56 { width: 58px; } .w44 { width: 44px; } .w46 { width: 46px; } .w66 { width: 66px; }
.w39 { width: 39px; } .w40 { width: 40px; } .w54 { width: 54px; }

.groups { display: flex; height: 91px; padding-top: 2px; }
.group { height: 88px; border-right: 1px solid #b9bbbc; display: flex; flex-direction: column; flex: none; }
.tools { height: 76px; display: flex; align-items: flex-start; flex: none; }
.cap { height: 12px; display: flex; justify-content: center; line-height: 16px; color: #555; }
.navcap { padding-right: 13px; }
.big { height: 72px; display: flex; flex-direction: column; align-items: center; padding-top: 3px; border-radius: 3px; line-height: 13px; color: #222; flex: none; }
.big > svg:first-child { margin-bottom: 3px; }
.big .chev { margin-top: 4px; }
.big.on { background: #9fdcff; color: #1c4a70; }
.big.off { color: #8d8f90; }
.big.off .chev { color: #888; }
.two { display: flex; gap: 2px; }
.big .two .in { margin-top: 4px; }
.stack { display: flex; flex-direction: column; gap: 8px; padding-top: 4px; }
.stack .up1 { margin-top: -1px; margin-bottom: 1px; }
.clip { padding-left: 3px; }
.nav { padding-left: 7px; }
.six { display: grid; grid-template-columns: 16px 16px; gap: 8px 6px; padding: 4px 3px 0; width: 44px; }
.layer { display: grid; grid-template-columns: 16px 14px 22px; gap: 8px 0; padding: 4px 0 0 11px; align-content: start; align-items: center; justify-items: center; }
.layer .l2 { margin-left: 5px; }
.sel { padding-left: 3px; }
.sel .w52, .sel .w46 { margin-right: -1px; margin-left: 1px; }
.sel .w60 { padding-right: 2px; }
.inq { padding-left: 6px; }
.inq .w72 { margin-left: 1px; }
.inq .w64 { margin-left: 0; width: 66px; }
.lab { padding-left: 10px; }
.labcol { width: 108px; display: flex; flex-direction: column; gap: 8px; padding-top: 4px; color: #222; }
.labrow { display: flex; height: 16px; align-items: center; gap: 3px; }
.labrow span { padding-top: 1px; }
.w38 { width: 33px; letter-spacing: -0.1px; }
.glyph { font: 10px "Noto Sans", sans-serif; fill: #444; }
.launch { width: 9px; height: 9px; margin-top: 4px; }
.caplab { justify-content: flex-end; gap: 60px; padding-right: 7px; }
.capoff { justify-content: flex-end; gap: 27px; padding-right: 4px; }
.offl { padding-left: 6px; }
.offl .stack { margin-left: 2px; }
.collapse { align-self: flex-end; margin: 0 0 1px 61px; }

/* work area */
.work { display: flex; height: 531px; padding: 6px 2px 0 5px; align-items: flex-start; }
.vbar { width: 17px; background: #ebebeb; display: flex; flex-direction: column; align-items: center; flex: none; }
.thumb { background: #b2b4b4; border-radius: 5px; width: 9px; display: block; }
.upc { transform: rotate(180deg); }
.lc { transform: rotate(90deg); }
.rc { transform: rotate(-90deg); }

.contents { width: 289px; height: 526px; background: #f7f9f8; border: 1px solid #d0d3d4; border-radius: 4px; display: flex; flex: none; }
.cmain { width: 270px; height: 519px; overflow: hidden; }
.contents h2, .whead h2 { font-size: 15px; line-height: 20px; color: #222; }
.contents h2 { padding: 5px 0 0 6px; letter-spacing: -0.1px; }
.find { display: flex; gap: 7px; align-items: center; padding: 6px 0 0 4px; }
.find i { width: 240px; height: 24px; border: 1px solid #999; background: #fff; line-height: 23px; padding-left: 5px; color: #555; letter-spacing: -0.3px; }
.views { display: flex; border-bottom: 2px solid #dcdedf; height: 42px; margin: 0 0 0 15px; }
.v { width: 32px; height: 41px; display: flex; align-items: center; justify-content: center; }
.v.on { border-bottom: 3px solid #0079c8; height: 42px; }
.contents h3 { font-size: 13.2px; line-height: 20px; letter-spacing: 0; padding: 11px 0 0 15px; -webkit-text-stroke: .2px #4a4a4a; }
.tri { width: 0; height: 0; border-left: 6px solid transparent; border-bottom: 6px solid #555; }
.node { display: flex; align-items: center; }
.n0 { height: 24px; padding-left: 3px; gap: 5px; margin-top: 4px; }
.n1 { height: 24px; padding-left: 14px; gap: 3px; margin-top: 1px; }
.n1 .tri, .n2 .tri { margin-left: 1px; }
.pick { height: 24px; flex: 1; border: 1px solid #0079c8; background: #c6e0f4; display: flex; align-items: center; gap: 5px; padding-left: 1px; }
.cb { display: block; width: 14px; height: 14px; border: 1px solid #777; border-radius: 3px; background: #fff; }
.cb svg { width: 14px; height: 14px; margin: -1px; }
.pick .cb { margin-top: 1px; }
.field { height: 22px; line-height: 21px; padding-left: 28px; }
.legend li { height: 20px; display: flex; align-items: center; gap: 8px; padding-left: 31px; }
.legend i { width: 16px; height: 13px; }
.n2 { height: 24px; padding-left: 14px; gap: 4px; margin-top: 3px; }
.n2 .cb { margin-right: 1px; }
.cbar { justify-content: space-between; padding-bottom: 6px; }
.cbar .thumb { height: 160px; margin-top: 168px; }

.center { width: 518px; height: 525px; margin-left: 6px; flex: none; }
.strip { height: 22px; display: flex; justify-content: flex-end; padding: 9px 4px 0 0; }
.mapview { height: 213px; border: 1px solid #d0d3d4; border-top: 3px solid #cfd1d5; background: #f7f9f8; }
.map { height: 184px; display: flex; justify-content: flex-end; background: #d3ffbe; }
#landcover { display: block; }
.place { font: bold 13px "Noto Sans", sans-serif; fill: #a8a4a4; }
.mapbar { height: 24px; display: flex; align-items: center; padding-left: 249px; }
.coord { width: 137px; letter-spacing: -0.42px; }
.sep { width: 1px; height: 15px; background: #999; }
.mb1 { margin-left: 8px; }
.zero { width: 17px; padding-left: 4px; color: #999; }
.s2 { margin: 0 9px 0 0; }
.s3 { margin-left: 8px; }
.pause { width: 11px; height: 14px; border: solid #6a6a6a; border-width: 0 4px; margin-left: 8px; }
.s4 { margin: 0 6px 0 9px; }
.s-b { height: 27px; }
.s-b .chev { margin-top: 4px; }
.tablepane { width: 516px; height: 263px; border-top: 2px solid #0079c8; padding: 2px 1px 0 1px; display: flex; flex-direction: column; gap: 1px; background: #f7f9f8; border-left: 1px solid #d5d7d8; }
.tbar { height: 30px; border: 1px solid #b9bcc0; background: #f0f1f3; display: flex; align-items: center; padding-left: 5px; flex: none; gap: 9.6px; }
.tbar b { letter-spacing: -0.25px; font-size: 11.700px; width: 28px; font-weight: 600; }
.dim { opacity: .45; color: #777; }
.c-d { color: #555; }
.tsep { width: 1px; height: 22px; background: #ccc; }
.tbar .selb { width: 54px; margin-left: -2px; }
.burger { width: 14px; height: 13px; border: solid #555; border-width: 3px 0; margin-left: auto; margin-right: 6px; background: linear-gradient(#0000 2px, #555 2px 5px, #0000 5px); }
.gridbox { height: 201px; border: 1px solid #c2c4c6; display: grid; grid-template: 182px 17px / 494px 17px; background: #ebebeb; flex: none; }
.gridclip { overflow: hidden; }
table { table-layout: fixed; border-collapse: separate; border-spacing: 0; width: 493px; }
td, th { height: 25px; padding: 0 4px 2px; border-right: 1px solid #c6c6c6; border-bottom: 1px solid #c6c6c6; text-align: left; font-weight: 400; overflow: hidden; line-height: 16px; }
tr:nth-child(even) td { background: #fff; }
th { background: #ebebeb; }
tr:first-child th { font-weight: 600; letter-spacing: -0.28px; padding: 1px 4px 0; }
tr td:last-child, tr th:last-child { border-right: 0; padding: 0; }
.r { text-align: right; }
tr:first-child th.corner { background: linear-gradient(135deg, #fff 68%, #c2c2c2 68%); }
tr:first-child th.cur { background: #c5e2f6; border-bottom: 2px solid #0079c8; padding-top: 2px; }
.cur1 { border-right: 2px solid #0079c8; background: #c5e2f6; }
tr:nth-child(even) td.curc { background: #c5e2f6; color: #267053; }
.gbar { width: 17px; padding: 6px 0; }
.gbar .thumb { height: 94px; margin: 7px 0 auto; }
.hbar { grid-column: 1 / 3; display: flex; align-items: center; padding: 0 22px 0 5px; }
.hbar .thumb { width: 405px; height: 9px; margin: 0 auto 0 4px; }
.tfoot { height: 26px; display: flex; align-items: center; flex: none; }
.mode { width: 32px; height: 22px; border: 1px solid #3fa5e8; background: #c6c8cb; display: flex; align-items: center; justify-content: center; }
.mode2 { margin-left: 10px; margin-top: -3px; }
.first { margin-left: 17px; }
.next { margin-left: 14px; }
.nsel { margin-left: 12px; width: 88px; }
.filt { width: 36px; }
.tog { display: flex; gap: 5px; background: #ecedef; height: 22px; align-items: center; padding: 0 2px; margin-left: 3px; }
.fun { margin-left: 5px; }
.ud { margin-left: 6px; }
.pm { font-size: 14px; width: 8px; margin: 0 8px 0 14px; }
.slider { width: 100px; height: 12px; display: flex; justify-content: center; background: linear-gradient(90deg, #999 50%, #d5d7d8 50%) 0 5px / 100px 2px no-repeat; }
.slider i { width: 3px; background: #666; }
.slider + .pm { margin: 0 0 0 7px; }
.pct { background: #fff; height: 22px; line-height: 23px; width: 34px; margin-left: 9px; padding-left: 5px; color: #222; letter-spacing: -0.3px; }

.side { width: 307px; height: 525px; margin-left: 6px; flex: none; }
.wizard { height: 506px; background: #f7f9f8; border: 1px solid #d0d3d4; border-radius: 4px 4px 0 0; }
.whead { display: flex; align-items: center; height: 30px; padding-left: 6px; color: #444; }
.whead h2 { width: 233px; letter-spacing: -0.08px; }
.whead b { width: 13px; }
.whead svg:nth-of-type(2) { margin-left: 9px; }
.whead svg:nth-of-type(3) { margin-left: 10px; }
.dots { display: flex; justify-content: center; gap: 4px; height: 11px; }
.dots i { width: 11px; height: 11px; border: 1px solid #999; border-radius: 6px; background: #72b9e6; }
.dots .o { background: #fff; }
.step { text-align: center; font-size: 14px; letter-spacing: 0; height: 34px; line-height: 25px; padding-right: 5px; }
.wbody { display: flex; height: 378px; justify-content: space-between; }
.form { width: 282px; height: 378px; overflow: hidden; padding-left: 10px; }
.form label { display: block; height: 21px; line-height: 23px; }
.combo { width: 264px; height: 23px; border: 1px solid #999; background: #fff; color: #222; display: flex; align-items: center; justify-content: space-between; padding: 0 3px 0 4px; }
.cls { display: flex; align-items: flex-end; gap: 6px; margin-top: 10px; height: 24px; }
.cls span { width: 101px; height: 16px; margin-bottom: -1px; }
button { height: 24px; background: #fff; border: 1px solid #444; font: inherit; letter-spacing: -0.1px; color: #4a4a4a; padding: 0; flex: none; }
.b70 { width: 70px; } .b84 { width: 84px; } .b104 { width: 104px; } .b78 { width: 78px; }
.checks { width: 269px; border: 1px solid #c0c2c4; background: #fff; margin-top: 4px; color: #222; }
.checks li { height: 22px; display: flex; align-items: center; padding-left: 6px; }
.checks .cb { border-radius: 0; border-color: #777; margin-top: -2px; }
.sw { width: 16px; height: 12px; border: 1px solid #b9b9b9; margin: -2px 4px 0 6px; }
.from { height: 200px; }
.c2 { margin-top: 12px; }
.to { height: 90px; }
.wbar { padding: 5px 0 6px; }
.wbar .thumb { height: 219px; margin: 8px 0 auto; }
.actions { display: flex; margin: 10px 10px 0; border-top: 1px solid #c8caca; padding-top: 9px; }
.actions .b78 { margin-left: 29px; margin-right: 5px; }
.ptabs { display: flex; height: 20px; line-height: 20px; font-size: 11.700px; }
.p1 { width: 53px; padding-left: 6px; letter-spacing: -0.05px; }
.p2 { width: 96px; padding-left: 5px; }
.p3 { width: 146px; padding-left: 6px; color: #0079c8; background: #f7f9f8; border: solid #d0d3d4; border-width: 0 1px; }

/* bookmarks menu */
.popup { position: absolute; left: 171px; top: 132px; width: 379px; height: 290px; background: #fff; border: 1px solid #c9cbcc; border-radius: 2px; box-shadow: 2px 3px 5px rgba(0, 0, 0, .35); color: #222; }
.all { height: 29px; border-bottom: 1px solid #d0d1d3; margin: 0 1px; display: flex; align-items: center; justify-content: flex-end; padding-right: 26px; gap: 1px; color: #444; letter-spacing: 0; }
.ptitle { display: block; padding-left: 18px; height: 27px; line-height: 30px; font-weight: 600; letter-spacing: -0.15px; -webkit-text-stroke: .2px #222; }
.tile { width: 124px; height: 82px; margin-left: 3px; background: #c2e6fa; padding: 7px 0 0 38px; color: #444; }
.tile svg { box-shadow: 2px 3px 3px rgba(60, 80, 90, .6); }
.tile span { display: block; padding-top: 5px; margin-left: -1px; letter-spacing: 0; }
.menu { border-top: 1px solid #d0d1d3; margin: 7px 1px 0; padding-top: 1px; }
.menu li { height: 26px; display: flex; align-items: center; gap: 8px; padding-left: 7px; }
.menu span { flex: 1; letter-spacing: -0.19px; }
.menu u { text-underline-offset: 2px; }
.menu .lg { margin-right: 9px; }
.ph { width: 17px; }
.grip { margin: -2px 0 0 369px; }
.tip { position: absolute; left: 249px; top: 219px; width: 117px; height: 53px; background: #fff; border: 1px solid #c4c4c4; box-shadow: 0 2px 4px rgba(0, 0, 0, .3); padding: 4px 0 0 10px; display: flex; flex-direction: column; line-height: 21px; }
.tip b { letter-spacing: 0; font-weight: 600; }
.tip span { letter-spacing: 0; }
```

FILE: map.js
```javascript
// Draws the classified land cover raster, one class per pixel.
// Shapes are given in thirds of a pixel.
(function () {
  var canvas = document.getElementById('landcover');
  var ctx = canvas.getContext('2d');
  var W = canvas.width, H = canvas.height;
  var img = ctx.createImageData(W, H);
  var COLORS = {
    water: [0, 112, 255], dev: [178, 178, 178], forest: [38, 115, 0],
    grass: [211, 255, 190], agri: [255, 170, 0], wet: [0, 168, 132]
  };
  var lakes = [
    [[240,175],[252,178],[264,225],[280,232],[284,190],[293,165],[308,150],[310,130],[330,128],[330,165],[317,200],[308,215],[314,248],[290,255],[256,248],[246,215]],
    [[270,285],[288,290],[285,315],[292,345],[294,372],[280,385],[272,410],[282,442],[263,448],[243,420],[243,392],[260,378],[263,345],[260,315]],
    [[212,365],[225,383],[250,381],[250,392],[222,394]],
    [[580,285],[592,288],[597,315],[612,325],[612,345],[632,368],[667,405],[668,418],[648,444],[620,427],[600,402],[570,400],[545,410],[512,402],[528,393],[575,380],[595,372],[585,355],[540,357],[533,338],[580,333]],
    [[122,400],[134,404],[134,430],[124,432]], [[480,490],[488,488],[487,510],[480,508]], [[515,134],[530,140],[532,154]]
  ];
  var streams = [
    [16, [345,87],[325,130]], [14, [235,135],[250,180]], [11, [290,250],[280,290]],
    [9, [268,448],[262,490],[252,540],[280,580],[285,630]],
    [5, [15,450],[50,455],[90,490],[125,500]], [12, [125,485],[125,525],[150,555],[180,600],[215,625]],
    [6, [600,210],[600,250],[585,290]], [5, [595,170],[603,210]], [7, [500,290],[510,320],[540,340]],
    [20, [650,440],[690,462]], [6, [490,395],[520,398]], [6, [200,385],[232,430]], [6, [210,345],[214,370]]
  ];
  var city = [[15,190],[60,215],[90,180],[135,185],[165,230],[195,290],[215,350],[212,400],[230,470],[235,520],[180,555],[120,540],[60,565],[15,555]];
  var farms = [[390,225,60,85,.62],[120,140,45,40,.65],[372,388,15,15,1],[320,550,38,100,.42],[470,150,50,50,.45],[490,180,40,40,.35],[225,605,22,22,.7],[125,605,24,24,.7],[65,95,55,16,.7],[260,105,16,28,.7],[210,215,34,40,.45],[350,320,16,50,.4],[670,200,10,30,.4],[50,180,50,50,.3],[115,275,60,10,.35],[235,490,18,18,.5]];
  var woods = [[460,300,50,24,.5],[440,375,75,26,.4],[245,150,22,34,.5],[410,550,30,40,.2],[660,390,34,90,.25],[520,570,60,40,.2],[50,600,60,40,.35],[560,230,90,70,.15],[590,180,30,60,.2]];
  var towns = [[300,370,14,40,1],[410,500,16,18,.9],[590,522,16,16,.9],[525,165,16,30,.9],[150,100,55,20,.7],[90,200,80,30,.5],[200,440,60,120,.5]];

  function inside(p, x, y) {
    var hit = false;
    for (var i = 0, j = p.length - 1; i < p.length; j = i++) {
      if ((p[i][1] > y) !== (p[j][1] > y) && x < (p[j][0] - p[i][0]) * (y - p[i][1]) / (p[j][1] - p[i][1]) + p[i][0]) hit = !hit;
    }
    return hit;
  }
  function near(s, x, y) {
    for (var i = 1; i < s.length - 1; i++) {
      var a = s[i], b = s[i + 1], dx = b[0] - a[0], dy = b[1] - a[1];
      var t = Math.max(0, Math.min(1, ((x - a[0]) * dx + (y - a[1]) * dy) / (dx * dx + dy * dy)));
      if (Math.hypot(x - a[0] - t * dx, y - a[1] - t * dy) < s[0] / 2) return true;
    }
    return false;
  }
  function hash(x, y, k) {
    var n = Math.imul(x + 101, 374761393) + Math.imul(y + 37, 668265263) + Math.imul(k, 974634777);
    n = Math.imul(n ^ (n >>> 13), 1274126177);
    n = Math.imul(n ^ (n >>> 15), 2246822519);
    return ((n ^ (n >>> 16)) >>> 0) / 4294967296;
  }
  function noise(x, y, s, k) {
    x /= s; y /= s;
    var i = Math.floor(x), j = Math.floor(y), u = x - i, v = y - j;
    return (hash(i, j, k) * (1 - u) + hash(i + 1, j, k) * u) * (1 - v) + (hash(i, j + 1, k) * (1 - u) + hash(i + 1, j + 1, k) * u) * v;
  }
  function density(list, x, y) {
    var d = 0;
    list.forEach(function (e) {
      var r = Math.hypot((x - e[0]) / e[2], (y - e[1]) / e[3]);
      if (r < 1.4) d = Math.max(d, e[4] * Math.min(1, (1.4 - r) / .7));
    });
    return d;
  }
  function classify(px, py) {
    var x = 15 + px * 3, y = 87 + py * 3, k;
    var jx = x + (hash(px, py, 1) - .5) * 5 + (noise(px, py, 3, 21) - .5) * 14;
    var jy = y + (hash(px, py, 2) - .5) * 5 + (noise(px, py, 3, 22) - .5) * 14;
    for (k = 0; k < lakes.length; k++) if (inside(lakes[k], jx, jy)) return 'water';
    for (k = 0; k < streams.length; k++) if (near(streams[k], jx, jy)) return 'wet';
    var r = hash(px, py, 3), wide = noise(px, py, 6, 9);
    if (inside(city, x + (wide - .5) * 70 + (r - .5) * 20, y + (noise(px, py, 5, 4) - .5) * 60)) return r < .97 ? 'dev' : r < .99 ? 'grass' : 'forest';
    var clump = .75 * noise(px, py, 2.4, 5) + .25 * hash(px >> 1, py >> 1, 8);
    if (clump < .12 + density(farms, x, y) * .62 * (.7 + .6 * wide)) return 'agri';
    var wood = .5 * hash(px, py, 7) + .5 * noise(px, py, 1.8, 11) + (noise(px, py, 7, 12) - .5) * .35;
    if (wood < .315 + density(woods, x, y) * .4) return 'forest';
    var town = (x < 240 ? .42 : x < 340 ? .3 : .2) + density(towns, x, y) * .4;
    if (.35 * hash(px, py, 14) + .4 * noise(px, py, 2.2, 15) + .25 * noise(px, py, 7, 16) < town) return 'dev';
    if (r > .993) return 'water';
    if (r > .984) return 'wet';
    return r > .97 ? 'agri' : 'grass';
  }
  for (var py = 0; py < H; py++) {
    for (var px = 0; px < W; px++) {
      var c = COLORS[classify(px, py)], o = (py * W + px) * 4;
      img.data[o] = c[0]; img.data[o + 1] = c[1]; img.data[o + 2] = c[2]; img.data[o + 3] = 255;
    }
  }
  ctx.putImageData(img, 0, 0);
})();
```
